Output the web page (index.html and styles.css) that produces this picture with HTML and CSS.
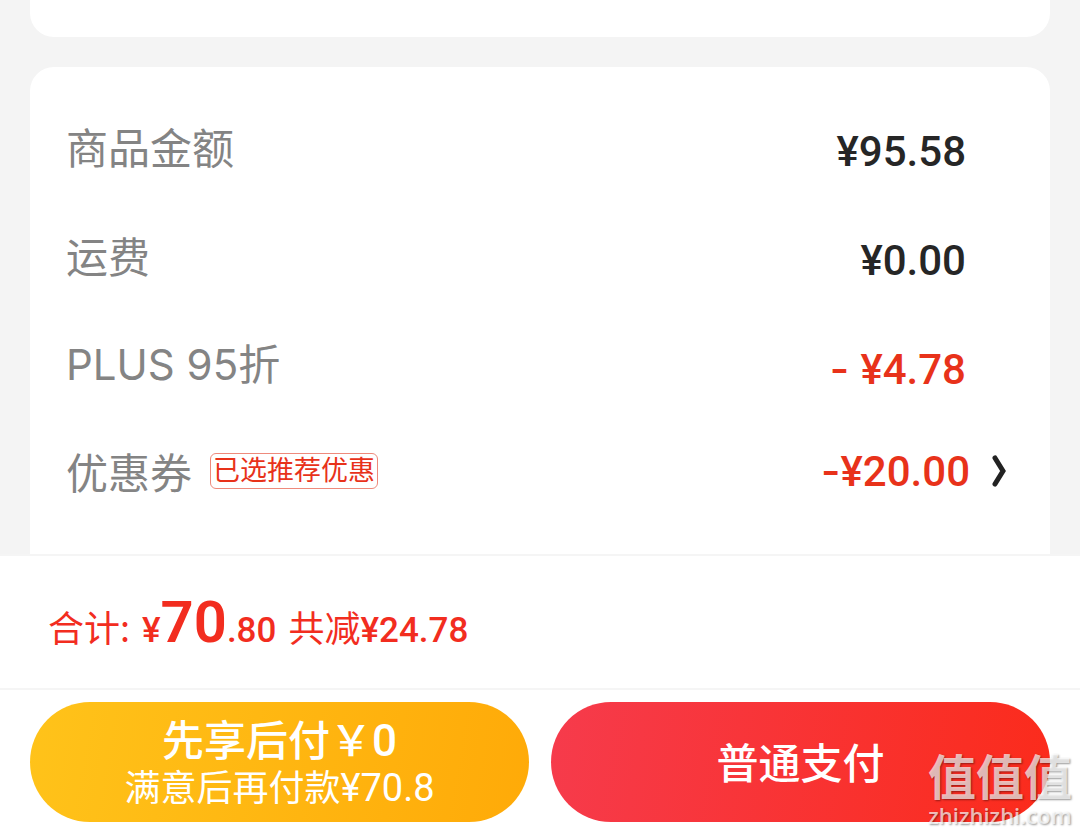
FILE: index.html
```html
<!DOCTYPE html>
<html lang="zh-CN">
  <head>
    <meta charset="UTF-8" />
    <meta name="viewport" content="width=device-width, initial-scale=1" />
    <title>确认订单</title>
    <link rel="stylesheet" href="styles.css">
  </head>
  <body>
    <main class="content">
      <section class="card card-prev"></section>

      <!-- Price details -->
      <section class="card card-price">
        <div class="row">
          <span class="label">商品金额</span>
          <span class="price">¥95.58</span>
        </div>
        <div class="row">
          <span class="label">运费</span>
          <span class="price">¥0.00</span>
        </div>
        <div class="row">
          <span class="label"><span class="latin">PLUS 95</span>折</span>
          <span class="price discount"><span class="minus">- </span>¥4.78</span>
        </div>
        <a href="#coupons" class="row row-link">
          <span class="label">优惠券</span>
          <span class="tag">已选推荐优惠</span>
          <span class="price discount"><span class="minus">-</span>¥20.00</span>
          <svg class="arrow" viewBox="0 0 14 32" aria-hidden="true">
            <path d="M3 3 L11 16 L3 29" />
          </svg>
        </a>
      </section>
    </main>

    <footer class="footer">
      <div class="total">
        <span class="total-label">合计:</span>
        <span class="total-price">¥<strong>70</strong>.80</span>
        <span class="total-saved">共减<span class="saved-price">¥24.78</span></span>
      </div>
      <div class="actions">
        <button type="button" class="btn btn-later">
          <span class="btn-title">先享后付￥<span class="btn-zero">0</span></span>
          <span class="btn-sub">满意后再付款<span class="btn-amount">¥70.8</span></span>
        </button>
        <button type="button" class="btn btn-pay">
          <span class="btn-title">普通支付</span>
        </button>
      </div>
    </footer>

    <!-- Watermark -->
    <div class="watermark">
      <span class="watermark-name">值值值</span>
      <span class="watermark-site">zhizhizhi.com</span>
    </div>
  </body>
</html>
```
FILE: styles.css
```css
:root {
  --page-bg: #f4f4f4;
  --line: #f5f5f5;
  --label: #848484;
  --text: #262626;
  --red: #e8321a;
  --cjk-font: "Noto Sans CJK SC", sans-serif;
  --price-font: Roboto, "Noto Sans CJK SC", sans-serif;
}

* {
  margin: 0;
  padding: 0;
  box-sizing: border-box;
}

body {
  display: flex;
  flex-direction: column;
  position: relative;
  min-height: 100vh;
  background: var(--page-bg);
  color: var(--text);
  font-family: var(--cjk-font);
}

.content {
  flex: 1;
  display: flex;
  flex-direction: column;
  gap: 30px;
  padding: 0 30px;
}

/* Cards */
.card {
  background: #fff;
}

.card-prev {
  padding-top: 37px;
  border-radius: 0 0 24px 24px;
}

.card-price {
  flex: 1;
  padding: 28px 36px 0;
  border-radius: 24px 24px 0 0;
}

.row {
  display: flex;
  align-items: center;
  min-height: 109px;
  padding-right: 48px;
  color: inherit;
  text-decoration: none;
}

.row-link {
  min-height: 98px;
  padding-right: 8px;
}

.label {
  padding-bottom: 8px;
  color: var(--label);
  font-size: 42px;
  line-height: 56px;
}

.latin {
  font-family: Inter, sans-serif;
}

.price {
  margin-left: auto;
  padding-top: 4px;
  font-family: var(--price-font);
  font-size: 42px;
  font-weight: 500;
  line-height: 48px;
  white-space: pre;
}

.row-link .label,
.row-link .price {
  padding: 0;
}

.discount {
  color: var(--red);
}

.minus {
  font-family: Inter, sans-serif;
}

.tag {
  margin-left: 18px;
  padding: 0 2px 4px;
  border: 1px solid #ee8a7c;
  border-radius: 6px;
  color: var(--red);
  font-size: 27px;
  line-height: 30px;
}

.arrow {
  width: 14px;
  height: 32px;
  margin-left: 22px;
  fill: none;
  stroke: #222;
  stroke-width: 5;
  stroke-linecap: round;
}

/* Bottom bar */
.footer {
  background: #fff;
  border-top: 2px solid var(--line);
}

.total {
  display: flex;
  align-items: baseline;
  height: 132px;
  padding: 26px 48px 0;
  color: #f22d1f;
  font-size: 36px;
  line-height: 80px;
}

.total-price {
  margin: 0 12px;
  font-family: var(--price-font);
  font-size: 35px;
  font-weight: 500;
}

.total-price strong {
  font-size: 58px;
  font-weight: 600;
}

.saved-price {
  font-family: var(--price-font);
  font-size: 35px;
  font-weight: 500;
}

.actions {
  display: flex;
  gap: 22px;
  padding: 12px 30px;
  border-top: 2px solid var(--line);
}

.btn {
  flex: 1;
  display: flex;
  flex-direction: column;
  align-items: center;
  justify-content: center;
  height: 120px;
  padding-bottom: 2px;
  border: none;
  border-radius: 60px;
  color: #fff;
  font-family: var(--cjk-font);
  cursor: pointer;
}

.btn-later {
  background: linear-gradient(100deg, #ffc31a, #ffaa08);
}

.btn-pay {
  background: linear-gradient(100deg, #f63b4c, #fb2b1b);
}

.btn-title {
  font-size: 42px;
  font-weight: 500;
  line-height: 48px;
}

.btn-zero {
  font-family: var(--price-font);
  font-size: 44px;
}

.btn-sub {
  font-size: 36px;
  line-height: 40px;
}

.btn-amount {
  font-family: var(--price-font);
  font-size: 38px;
}

/* Watermark over the bottom right corner */
.watermark {
  position: absolute;
  right: 8px;
  bottom: 6px;
  display: flex;
  flex-direction: column;
  align-items: center;
  gap: 2px;
  color: rgba(255, 255, 255, 0.7);
  text-shadow: 1px 1px 2px rgba(0, 0, 0, 0.4);
  pointer-events: none;
}

.watermark-name {
  font-size: 48px;
  font-weight: 700;
  line-height: 52px;
}

.watermark-site {
  font-family: "Open Sans", sans-serif;
  font-size: 22px;
  font-weight: 600;
  line-height: 26px;
}
```
